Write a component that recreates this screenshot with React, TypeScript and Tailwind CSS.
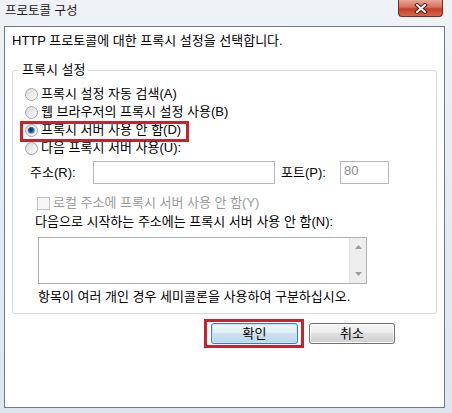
import React from 'react';

function Radio({ checked }: { checked?: boolean }) {
    return (
        <svg width="13" height="13" viewBox="0 0 13 13" className="shrink-0">
            <defs>
                <linearGradient id="radioFill" x1="0" y1="0" x2="1" y2="1">
                    <stop offset="0" stopColor="#d6d6d6" />
                    <stop offset="1" stopColor="#ffffff" />
                </linearGradient>
                <radialGradient id="radioDot" cx="0.4" cy="0.4" r="0.6">
                    <stop offset="0" stopColor="#0b2a4a" />
                    <stop offset="0.55" stopColor="#1f5d92" />
                    <stop offset="1" stopColor="#8cc2ea" />
                </radialGradient>
            </defs>
            <circle cx="6.5" cy="6.5" r="6" fill="url(#radioFill)" stroke="#a8a8a8" />
            {checked && <circle cx="6.5" cy="6.5" r="3.6" fill="url(#radioDot)" />}
        </svg>
    );
}

function RadioRow({ label, checked, marked }: { label: string; checked?: boolean; marked?: boolean }) {
    return (
        <div className="relative h-[18px] flex items-center gap-[3px] pl-[12px]">
            <Radio checked={checked} />
            <span className="leading-[14px]">{label}</span>
            {marked && (
                <span className="absolute left-[7px] top-0 w-[169px] h-[21px] border-[3px] border-[#c8232c]" />
            )}
        </div>
    );
}

export default function App() {
    return (
        <div className="w-[452px] h-[413px] overflow-hidden flex flex-col bg-[linear-gradient(#eff2f6,#dde5ef)] text-[13px] text-black font-['Liberation_Sans','Noto_Sans_CJK_KR',sans-serif]">
            {/* title bar */}
            <div className="h-[26px] flex items-start justify-between shrink-0">
                <span className="pl-[5px] pt-[4px] leading-[14px] text-[12.5px] text-[#1a1a1a]">프로토콜 구성</span>
                <div className="mr-[9px] w-[45px] h-[17px] rounded-b-[4px] border border-t-0 border-[#7b2a20] bg-[linear-gradient(#e9a898,#d7705d_45%,#c43f26_55%,#d3684e)] flex items-center justify-center">
                    <svg width="14" height="11" viewBox="0 0 14 11">
                        <path d="M3 2 L11 9 M11 2 L3 9" stroke="#5b1a10" strokeWidth="4" strokeLinecap="square" />
                        <path d="M3 2 L11 9 M11 2 L3 9" stroke="#ffffff" strokeWidth="2" strokeLinecap="square" />
                    </svg>
                </div>
            </div>

            {/* client area */}
            <div className="ml-[4px] mr-[7px] h-[382px] shrink-0 border border-[#6f7a86] bg-white flex flex-col">
                <div className="mt-[7px] ml-[7px] h-[14px] leading-[14px]">HTTP 프로토콜에 대한 프록시 설정을 선택합니다.</div>

                <div className="relative mt-[22px] ml-[7px] w-[425px] h-[244px] border border-[#d5dce3] rounded-[3px] flex flex-col pt-[14px]">
                    <span className="absolute left-[6px] top-[-8px] px-[3px] bg-white leading-[14px]">프록시 설정</span>

                    <RadioRow label="프록시 설정 자동 검색(A)" />
                    <RadioRow label="웹 브라우저의 프록시 설정 사용(B)" />
                    <RadioRow label="프록시 서버 사용 안 함(D)" checked marked />
                    <RadioRow label="다음 프록시 서버 사용(U):" />

                    <div className="mt-[4px] h-[23px] flex items-center pl-[17px]">
                        <span className="w-[63px] leading-[14px]">주소(R):</span>
                        <div className="w-[182px] h-[23px] border border-[#b5b9bf] bg-white" />
                        <span className="ml-[6px] w-[59px] leading-[14px]">포트(P):</span>
                        <div className="w-[49px] h-[23px] border border-[#b5b9bf] bg-white pl-[3px] pt-[2px] leading-[14px] text-[#8d8d8d]">80</div>
                    </div>

                    <div className="mt-[10px] h-[18px] flex items-center gap-[3px] pl-[24px] text-[#9a9a9a]">
                        <span className="w-[13px] h-[13px] border border-[#c3c3c3] bg-[#f7f7f7] shrink-0" />
                        <span className="leading-[14px]">로컬 주소에 프록시 서버 사용 안 함(Y)</span>
                    </div>

                    <div className="mt-[1px] h-[18px] flex items-center pl-[22px]">
                        <span className="leading-[14px]">다음으로 시작하는 주소에는 프록시 서버 사용 안 함(N):</span>
                    </div>

                    <div className="mt-[6px] ml-[25px] w-[329px] h-[47px] border border-[#adb2b8] bg-white flex">
                        <div className="flex-1" />
                        <div className="w-[17px] bg-[#eeeeee] border-l border-[#e2e2e2] flex flex-col items-center justify-between py-[7px]">
                            <svg width="7" height="4" viewBox="0 0 7 4">
                                <path d="M0 4 L3.5 0 L7 4 Z" fill="#9c9c9c" />
                            </svg>
                            <svg width="7" height="4" viewBox="0 0 7 4">
                                <path d="M0 0 L7 0 L3.5 4 Z" fill="#9c9c9c" />
                            </svg>
                        </div>
                    </div>

                    <div className="mt-[4px] h-[18px] flex items-center pl-[25px]">
                        <span className="leading-[14px]">항목이 여러 개인 경우 세미콜론을 사용하여 구분하십시오.</span>
                    </div>
                </div>

                <div className="mt-[9px] mr-[49px] flex justify-end gap-[11px]">
                    <div className="relative">
                        <button className="w-[87px] h-[21px] rounded-[3px] border border-[#3c7fb1] bg-[linear-gradient(#eef6fb_0%,#dfeef7_50%,#cde3f1_50%,#bcd7ea_100%)] leading-[14px] shadow-[inset_0_0_0_1px_#c4e5f6]">
                            확인
                        </button>
                        <span className="absolute left-[-7px] right-[-6px] top-[-4px] bottom-[-4px] border-[3px] border-[#c8232c]" />
                    </div>
                    <button className="w-[86px] h-[21px] rounded-[3px] border border-[#707070] bg-[linear-gradient(#f4f4f4_0%,#ececec_50%,#dedede_50%,#d1d1d1_100%)] leading-[14px] shadow-[inset_0_0_0_1px_#fbfbfb]">
                        취소
                    </button>
                </div>
            </div>
        </div>
    );
}
